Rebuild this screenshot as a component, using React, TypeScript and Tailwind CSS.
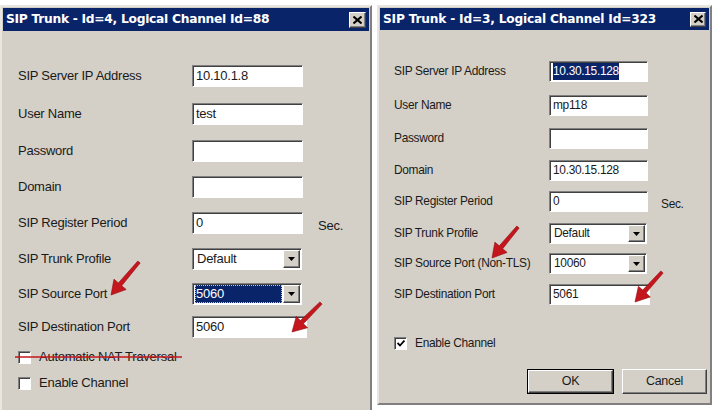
import React from 'react';

const sunken =
  'border border-t-[#808080] border-l-[#808080] border-r-white border-b-white shadow-[inset_1px_1px_0_#404040] bg-white';
const raised =
  'border border-t-white border-l-white border-r-[#404040] border-b-[#404040] shadow-[inset_-1px_-1px_0_#808080] bg-[#d4d0c8]';

function CloseBox({ size }: { size: string }) {
  return (
    <div className={`${raised} ${size} flex items-center justify-center`}>
      <svg width="9" height="8" viewBox="0 0 9 8">
        <path d="M0.5 0.5 L8.5 7.5 M8.5 0.5 L0.5 7.5" stroke="#000" strokeWidth="2" />
      </svg>
    </div>
  );
}

function DropBtn() {
  return (
    <div className={`${raised} w-[17px] h-full flex items-center justify-center shrink-0`}>
      <svg width="7" height="4" viewBox="0 0 7 4">
        <path d="M0 0 H7 L3.5 4 Z" fill="#000" />
      </svg>
    </div>
  );
}

function Check({ checked }: { checked?: boolean }) {
  return (
    <div className={`${sunken} w-[13px] h-[13px] flex items-center justify-center shrink-0`}>
      {checked && (
        <svg width="8" height="7" viewBox="0 0 8 7">
          <path d="M0.5 3 L3 5.5 L7.5 0.5" stroke="#000" strokeWidth="1.8" fill="none" />
        </svg>
      )}
    </div>
  );
}

function Arrow({ x1, y1, x2, y2 }: { x1: number; y1: number; x2: number; y2: number }) {
  const dx = x2 - x1;
  const dy = y2 - y1;
  const len = Math.hypot(dx, dy);
  const ux = dx / len;
  const uy = dy / len;
  const px = -uy;
  const py = ux;
  const head = 14;
  const hw = 8;
  const sw = 2.2;
  const bx = x2 - ux * head;
  const by = y2 - uy * head;
  const pts = [
    [x1 + px * sw * 0.7, y1 + py * sw * 0.7],
    [bx + px * sw, by + py * sw],
    [bx + px * hw, by + py * hw],
    [x2, y2],
    [bx - px * hw, by - py * hw],
    [bx - px * sw, by - py * sw],
    [x1 - px * sw * 0.7, y1 - py * sw * 0.7],
  ]
    .map((p) => p.join(','))
    .join(' ');
  return <polygon points={pts} fill="#c4161c" stroke="#8e0d10" strokeWidth="0.6" strokeLinejoin="round" />;
}

const leftRows = [
  { label: 'SIP Server IP Address', value: '10.10.1.8', mt: 'mt-[34px]' },
  { label: 'User Name', value: 'test', mt: 'mt-[16px]' },
  { label: 'Password', value: '', mt: 'mt-[15px]' },
  { label: 'Domain', value: '', mt: 'mt-[14px]' },
  { label: 'SIP Register Period', value: '0', mt: 'mt-[14px]', sec: true },
  { label: 'SIP Trunk Profile', value: 'Default', mt: 'mt-[14px]', combo: true },
  { label: 'SIP Source Port', value: '5060', mt: 'mt-[13px]', combo: true, selected: true },
  { label: 'SIP Destination Port', value: '5060', mt: 'mt-[11px]', wide: true },
];

const rightRows = [
  { label: 'SIP Server IP Address', value: '10.30.15.128', mt: 'mt-[31px]', highlight: true },
  { label: 'User Name', value: 'mp118', mt: 'mt-[13px]' },
  { label: 'Password', value: '', mt: 'mt-[12px]' },
  { label: 'Domain', value: '10.30.15.128', mt: 'mt-[11px]' },
  { label: 'SIP Register Period', value: '0', mt: 'mt-[10px]', sec: true },
  { label: 'SIP Trunk Profile', value: 'Default', mt: 'mt-[11px]', combo: true },
  { label: 'SIP Source Port (Non-TLS)', value: '10060', mt: 'mt-[9px]', combo: true },
  { label: 'SIP Destination Port', value: '5061', mt: 'mt-[10px]', wide: true },
];

export default function App() {
  return (
    <div
      className="relative w-[720px] h-[410px] overflow-hidden bg-white flex gap-[5px] pt-[5px] text-black"
      style={{ fontFamily: '"Liberation Sans", Arial, sans-serif' }}
    >
      {/* left dialog */}
      <div className="w-[372px] h-[420px] shrink-0 border-2 border-t-[#e8e6e1] border-l-[#e8e6e1] border-r-[#808080] border-b-[#808080] bg-[#d4d0c8] p-[1px] flex flex-col">
        <div className="h-[23px] bg-[#0a246a] flex items-center justify-between pl-[3px] pr-[3px]">
          <span className="text-white font-bold tracking-[-0.3px]" style={{ fontFamily: '"DejaVu Sans", Verdana, sans-serif', fontSize: '12.3px' }}>
            SIP Trunk - Id=4, Logical Channel Id=88
          </span>
          <CloseBox size="w-[17px] h-[16px]" />
        </div>
        <div className="flex flex-col pl-[15px] text-[13px] tracking-[-0.25px] text-[#1a1a1a]">
          {leftRows.map((r) => (
            <div key={r.label} className={`${r.mt} h-[22px] flex items-center`}>
              <div className="w-[174px] shrink-0">{r.label}</div>
              {r.combo ? (
                <div className={`${sunken} w-[110px] h-full flex items-stretch p-[1px]`}>
                  <div className="flex-1 flex items-center px-[1px]">
                    {r.selected ? (
                      <div className="w-full h-full bg-[#0a246a] text-white flex items-center pl-[1px] outline-1 outline-dotted outline-[#c0c0c0] -outline-offset-1">
                        {r.value}
                      </div>
                    ) : (
                      <span className="pl-[2px]">{r.value}</span>
                    )}
                  </div>
                  <DropBtn />
                </div>
              ) : (
                <div className={`${sunken} ${r.wide ? 'w-[115px]' : 'w-[111px]'} h-full flex items-center pl-[3px]`}>
                  {r.value}
                </div>
              )}
              {r.sec && <span className="ml-[15px] mt-[6px]">Sec.</span>}
            </div>
          ))}
          <div className="mt-[12px] flex items-center gap-[8px] h-[14px]">
            <Check />
            <span>Automatic NAT Traversal</span>
          </div>
          <div className="mt-[12px] flex items-center gap-[8px] h-[14px]">
            <Check />
            <span>Enable Channel</span>
          </div>
        </div>
      </div>

      {/* right dialog */}
      <div className="w-[335px] h-[400px] shrink-0 border-2 border-t-[#e8e6e1] border-l-[#e8e6e1] border-r-[#808080] border-b-[#808080] bg-[#d4d0c8] p-[1px] flex flex-col">
        <div className="h-[22px] bg-[#0a246a] flex items-center justify-between pl-[3px] pr-[3px]">
          <span className="text-white font-bold tracking-[-0.2px]" style={{ fontFamily: '"DejaVu Sans", Verdana, sans-serif', fontSize: '12.2px' }}>
            SIP Trunk - Id=3, Logical Channel Id=323
          </span>
          <CloseBox size="w-[16px] h-[15px]" />
        </div>
        <div className="flex flex-col pl-[14px] text-[11.9px] tracking-[-0.3px] text-[#1a1a1a]">
          {rightRows.map((r) => (
            <div key={r.label} className={`${r.mt} h-[21px] flex items-center`}>
              <div className="w-[155px] shrink-0">{r.label}</div>
              {r.combo ? (
                <div className={`${sunken} w-[98px] h-full flex items-stretch p-[1px]`}>
                  <div className="flex-1 flex items-center pl-[3px]">{r.value}</div>
                  <DropBtn />
                </div>
              ) : (
                <div className={`${sunken} ${r.wide ? 'w-[101px]' : 'w-[99px]'} h-full flex items-center pl-[3px]`}>
                  {r.highlight ? <span className="bg-[#0a246a] text-white">{r.value}</span> : r.value}
                </div>
              )}
              {r.sec && <span className="ml-[13px] mt-[6px]">Sec.</span>}
            </div>
          ))}
          <div className="mt-[32px] flex items-center gap-[8px] h-[13px]">
            <Check checked />
            <span>Enable Channel</span>
          </div>
          <div className="mt-[19px] flex justify-end gap-[8px] pr-[2px] text-[12.5px]">
            <div className="w-[87px] h-[25px] border border-black">
              <div className={`${raised} w-full h-full flex items-center justify-center`}>OK</div>
            </div>
            <div className={`${raised} w-[85px] h-[25px] flex items-center justify-center`}>Cancel</div>
          </div>
        </div>
      </div>

      {/* annotations */}
      <svg className="absolute inset-0 pointer-events-none" width="720" height="410">
        <line x1="15" y1="357" x2="182" y2="357" stroke="#c4161c" strokeWidth="1.5" />
        <Arrow x1={139} y1={262} x2={111} y2={295} />
        <Arrow x1={321} y1={303} x2={292} y2={332} />
        <Arrow x1={518} y1={227} x2={492} y2={258} />
        <Arrow x1={662} y1={272} x2={635} y2={302} />
      </svg>
    </div>
  );
}
